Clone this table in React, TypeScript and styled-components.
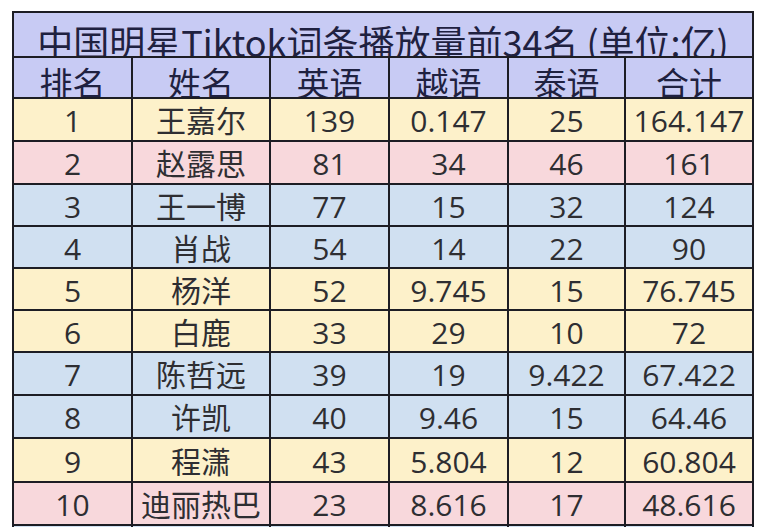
import styled, { createGlobalStyle } from "styled-components";

type Tone = "yellow" | "pink" | "blue";

const tones: Record<Tone, string> = {
  yellow: "#fdf1ca",
  pink: "#f8d8dc",
  blue: "#d0e0f1",
};

const GlobalStyle = createGlobalStyle`
  html, body {
    margin: 0;
    padding: 0;
    background: #ffffff;
  }
  body {
    font-family: "Open Sans", "Noto Sans CJK SC", sans-serif;
  }
`;

const headers = ["排名", "姓名", "英语", "越语", "泰语", "合计"];

const rows: { cells: string[]; tone: Tone }[] = [
  { cells: ["1", "王嘉尔", "139", "0.147", "25", "164.147"], tone: "yellow" },
  { cells: ["2", "赵露思", "81", "34", "46", "161"], tone: "pink" },
  { cells: ["3", "王一博", "77", "15", "32", "124"], tone: "blue" },
  { cells: ["4", "肖战", "54", "14", "22", "90"], tone: "blue" },
  { cells: ["5", "杨洋", "52", "9.745", "15", "76.745"], tone: "yellow" },
  { cells: ["6", "白鹿", "33", "29", "10", "72"], tone: "yellow" },
  { cells: ["7", "陈哲远", "39", "19", "9.422", "67.422"], tone: "blue" },
  { cells: ["8", "许凯", "40", "9.46", "15", "64.46"], tone: "blue" },
  { cells: ["9", "程潇", "43", "5.804", "12", "60.804"], tone: "yellow" },
  { cells: ["10", "迪丽热巴", "23", "8.616", "17", "48.616"], tone: "pink" },
  { cells: ["", "", "", "", "", ""], tone: "blue" },
];

const App = () => {
  return (
    <Page>
      <GlobalStyle />
      <Sheet>
        <TitleCell>
          <TitleText>中国明星Tiktok词条播放量前34名 (单位:亿)</TitleText>
        </TitleCell>
        {headers.map((h) => (
          <HeaderCell key={h}>
            <HeaderText>{h}</HeaderText>
          </HeaderCell>
        ))}
        {rows.map((row, i) =>
          row.cells.map((c, j) => (
            <Cell key={`${i}-${j}`} $tone={row.tone}>
              {c}
            </Cell>
          ))
        )}
      </Sheet>
    </Page>
  );
};

const Page = styled.div`
  height: 527px;
  overflow: hidden;
  box-sizing: border-box;
  padding: 11px 0 0 12px;
`;

const Sheet = styled.div`
  display: grid;
  width: max-content;
  grid-template-columns: 117px 136px 117px 117px 115px 126px;
  grid-template-rows: 43px 39px 41px 41px 40px 40px 40px 40px 41px 41px 42px 41px 41px;
  gap: 2px;
  padding: 2px;
  background: #1d1d24;
`;

const TitleCell = styled.div`
  grid-column: 1 / -1;
  display: flex;
  align-items: flex-end;
  justify-content: center;
  overflow: hidden;
  background: #c8cbf4;
`;

const TitleText = styled.span`
  font-family: "Noto Sans CJK SC", sans-serif;
  font-size: 36px;
  line-height: 1;
  color: #1f2140;
  margin-bottom: -3px;
  white-space: nowrap;
`;

const HeaderCell = styled.div`
  display: flex;
  align-items: flex-end;
  justify-content: center;
  overflow: hidden;
  background: #c8cbf4;
`;

const HeaderText = styled.span`
  font-family: "Noto Sans CJK SC", sans-serif;
  font-size: 33px;
  line-height: 1;
  color: #1f2140;
  margin-bottom: -2px;
`;

const Cell = styled.div<{ $tone: Tone }>`
  display: flex;
  align-items: center;
  justify-content: center;
  padding-top: 3px;
  box-sizing: border-box;
  background: ${(p) => tones[p.$tone]};
  color: #2e2e32;
  font-size: 30px;
  line-height: 1;
  white-space: nowrap;
`;

export default App;
